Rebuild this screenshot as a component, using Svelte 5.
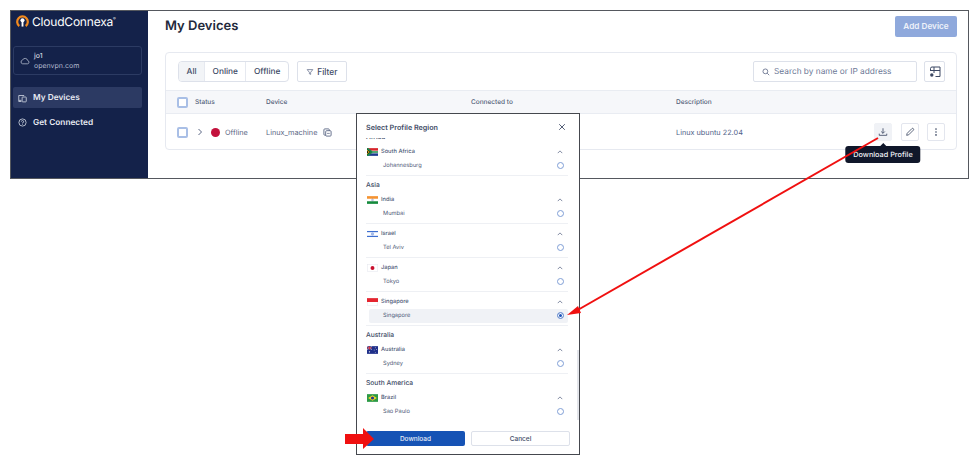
<script>
  const regions = [
    { name: 'Africa', groups: [{ country: 'South Africa', flag: 'za', city: 'Johannesburg' }] },
    {
      name: 'Asia',
      groups: [
        { country: 'India', flag: 'in', city: 'Mumbai' },
        { country: 'Israel', flag: 'il', city: 'Tel Aviv' },
        { country: 'Japan', flag: 'jp', city: 'Tokyo' },
        { country: 'Singapore', flag: 'sg', city: 'Singapore', selected: true }
      ]
    },
    { name: 'Australia', groups: [{ country: 'Australia', flag: 'au', city: 'Sydney' }] },
    { name: 'South America', groups: [{ country: 'Brazil', flag: 'br', city: 'Sao Paulo' }] }
  ];
</script>

{#snippet flag(code)}
  <svg class="flag" viewBox="0 0 20 14">
    {#if code === 'za'}
      <rect width="20" height="14" fill="#fff" />
      <rect width="20" height="4.5" fill="#d8232a" />
      <rect y="9.5" width="20" height="4.5" fill="#1b3a8f" />
      <path d="M0 0 L9 7 L0 14 Z" fill="#111" />
      <path d="M0 0 L9 7 L20 7" fill="none" stroke="#1a8a4a" stroke-width="3" />
      <path d="M0 14 L9 7" fill="none" stroke="#1a8a4a" stroke-width="3" />
      <path d="M0 3 L5 7 L0 11 Z" fill="#f5c518" />
      <path d="M0 4.5 L3 7 L0 9.5 Z" fill="#111" />
    {:else if code === 'in'}
      <rect width="20" height="14" fill="#fff" />
      <rect width="20" height="4.7" fill="#f59331" />
      <rect y="9.3" width="20" height="4.7" fill="#148a3c" />
      <circle cx="10" cy="7" r="1.6" fill="none" stroke="#23308f" stroke-width=".6" />
    {:else if code === 'il'}
      <rect width="20" height="14" fill="#fff" />
      <rect y="1.5" width="20" height="2.2" fill="#3f6fd0" />
      <rect y="10.3" width="20" height="2.2" fill="#3f6fd0" />
      <path d="M10 4.6 L12.2 8.4 L7.8 8.4 Z M10 9.4 L7.8 5.6 L12.2 5.6 Z" fill="none" stroke="#3f6fd0" stroke-width=".6" />
    {:else if code === 'jp'}
      <rect x=".5" y=".5" width="19" height="13" fill="#fff" stroke="#e6e8ee" />
      <circle cx="10" cy="7" r="3.6" fill="#c8102e" />
    {:else if code === 'sg'}
      <rect x=".5" y=".5" width="19" height="13" fill="#fff" stroke="#e6e8ee" />
      <rect width="20" height="7" fill="#e5252f" />
    {:else if code === 'au'}
      <rect width="20" height="14" fill="#1f2f8a" />
      <rect width="9" height="6.5" fill="#3a478f" />
      <path d="M0 0 L9 6.5 M9 0 L0 6.5" stroke="#e5e7f2" stroke-width="1" />
      <path d="M4.5 0 V6.5 M0 3.2 H9" stroke="#e5252f" stroke-width="1.4" />
      <circle cx="4.5" cy="10.3" r="1.2" fill="#fff" />
      <circle cx="15" cy="3" r=".8" fill="#fff" />
      <circle cx="17.5" cy="6" r=".8" fill="#fff" />
      <circle cx="13" cy="7" r=".8" fill="#fff" />
      <circle cx="15" cy="11.3" r=".8" fill="#fff" />
    {:else if code === 'br'}
      <rect width="20" height="14" fill="#2c9a46" />
      <path d="M10 1.8 L18 7 L10 12.2 L2 7 Z" fill="#f3d32c" />
      <circle cx="10" cy="7" r="2.9" fill="#23378f" />
    {/if}
  </svg>
{/snippet}

<div class="window">
  <aside class="sidebar">
    <div class="brand">
      <svg class="logo" viewBox="0 0 14 14">
        <path d="M3.6 12.4 A5.7 5.7 0 1 1 10.4 12.4" fill="none" stroke="#f28a1e" stroke-width="2.4" />
        <circle cx="7" cy="6.2" r="2.2" fill="#fff" />
        <rect x="6" y="7" width="2" height="6" fill="#fff" />
      </svg>
      <span>CloudConnexa</span><sup>®</sup>
    </div>
    <div class="account">
      <svg class="cloud" viewBox="0 0 16 12">
        <path d="M4.2 10.5 H12 A2.6 2.6 0 0 0 12.4 5.4 A4.4 4.4 0 0 0 4 4.6 A3 3 0 0 0 4.2 10.5 Z" fill="none" stroke="#c9d0df" stroke-width="1.1" />
      </svg>
      <div>
        <div class="acc-name">jo1</div>
        <div class="acc-domain">openvpn.com</div>
      </div>
    </div>
    <nav>
      <div class="nav-item active">
        <svg viewBox="0 0 12 12">
          <path d="M8 2.5 V2 H1 V8.5 H4.5 M1 8.5 V10 H4.5" fill="none" stroke="#dfe4ee" stroke-width="1" />
          <rect x="5.5" y="4" width="5.5" height="6.5" rx=".8" fill="none" stroke="#dfe4ee" stroke-width="1" />
        </svg>
        My Devices
      </div>
      <div class="nav-item">
        <svg viewBox="0 0 12 12">
          <circle cx="6" cy="6" r="4.8" fill="none" stroke="#dfe4ee" stroke-width="1" />
          <path d="M4.5 4.8 A1.5 1.5 0 1 1 6 6.4 V7.2" fill="none" stroke="#dfe4ee" stroke-width="1" />
          <circle cx="6" cy="8.7" r=".6" fill="#dfe4ee" />
        </svg>
        Get Connected
      </div>
    </nav>
  </aside>

  <main class="content">
    <header class="top">
      <h1>My Devices</h1>
      <button class="add">Add Device</button>
    </header>

    <section class="card">
      <div class="toolbar">
        <div class="segments">
          <span class="seg on">All</span>
          <span class="seg">Online</span>
          <span class="seg">Offline</span>
        </div>
        <button class="filter">
          <svg viewBox="0 0 10 10"><path d="M1.5 2 H8.5 L5.8 5.4 V8 L4.2 7.2 V5.4 Z" fill="none" stroke="#5a6684" stroke-width=".9" /></svg>
          Filter
        </button>
        <div class="search">
          <svg viewBox="0 0 10 10"><circle cx="4.2" cy="4.2" r="3" fill="none" stroke="#5a6684" stroke-width="1" /><path d="M6.5 6.5 L9 9" stroke="#5a6684" stroke-width="1" /></svg>
          Search by name or IP address
        </div>
        <button class="square">
          <svg viewBox="0 0 12 12">
            <path d="M4 1 H11 V10.5 H6.5 M1.5 5 V2.5 A1.5 1.5 0 0 1 3 1 H4 M1.5 4.5 H11 M5 1 V7" fill="none" stroke="#3d4964" stroke-width="1" />
            <circle cx="2.8" cy="9" r="1.7" fill="#3d4964" />
          </svg>
        </button>
      </div>

      <div class="row head">
        <span class="check"></span>
        <span class="c-status">Status</span>
        <span class="c-device">Device</span>
        <span class="c-conn">Connected to</span>
        <span>Description</span>
      </div>

      <div class="row body">
        <span class="check"></span>
        <div class="c-status status">
          <svg class="chev" viewBox="0 0 6 8"><path d="M1.5 1 L4.5 4 L1.5 7" fill="none" stroke="#5a6684" stroke-width="1" /></svg>
          <span class="dot"></span>
          Offline
        </div>
        <div class="c-device device">
          Linux_machine
          <svg viewBox="0 0 10 10">
            <rect x="1" y="1" width="6" height="7" rx="1" fill="none" stroke="#5a6684" stroke-width="1" />
            <rect x="3" y="3" width="6" height="6" rx="1" fill="#fff" stroke="#5a6684" stroke-width="1" />
            <path d="M4.5 6 H7.5" stroke="#5a6684" stroke-width=".8" />
          </svg>
        </div>
        <span class="c-conn"></span>
        <span class="desc">Linux ubuntu 22.04</span>
        <div class="actions">
          <div class="tool hover">
            <svg viewBox="0 0 12 12"><path d="M6 1.5 V7.5 M3.8 5.4 L6 7.6 L8.2 5.4 M1.5 8 V10 H10.5 V8" fill="none" stroke="#3d4964" stroke-width="1" /></svg>
            <div class="tip">Download Profile</div>
          </div>
          <div class="tool">
            <svg viewBox="0 0 12 12"><path d="M2 10 L2.6 7.6 L8.2 2 A1 1 0 0 1 10 3.8 L4.4 9.4 Z" fill="none" stroke="#3d4964" stroke-width="1" /></svg>
          </div>
          <div class="tool">
            <svg viewBox="0 0 12 12"><circle cx="6" cy="2.5" r="1" fill="#3d4964" /><circle cx="6" cy="6" r="1" fill="#3d4964" /><circle cx="6" cy="9.5" r="1" fill="#3d4964" /></svg>
          </div>
        </div>
      </div>
    </section>
  </main>
</div>

<div class="modal">
  <div class="modal-head">
    <span>Select Profile Region</span>
    <svg viewBox="0 0 10 10"><path d="M1.5 1.5 L8.5 8.5 M8.5 1.5 L1.5 8.5" stroke="#3d4964" stroke-width="1.1" /></svg>
  </div>
  <div class="list">
    <div class="list-inner">
      {#each regions as region}
        <div class="region">{region.name}</div>
        {#each region.groups as g}
          <div class="group">
            <div class="country">
              {@render flag(g.flag)}
              <span>{g.country}</span>
              <svg class="up" viewBox="0 0 8 5"><path d="M1 4 L4 1 L7 4" fill="none" stroke="#5a6684" stroke-width="1" /></svg>
            </div>
            <div class="city" class:selected={g.selected}>
              <span>{g.city}</span>
              <span class="radio"></span>
            </div>
          </div>
        {/each}
      {/each}
    </div>
    <div class="scrollbar"></div>
  </div>
  <div class="modal-foot">
    <button class="primary">Download</button>
    <button class="secondary">Cancel</button>
  </div>
</div>

<!-- annotations drawn on top of the screenshot -->
<svg class="annotations" viewBox="0 0 975 464">
  <path d="M878 138 L576 311" stroke="#f01010" stroke-width="2" />
  <path d="M567 315 L578 306 L581 313 Z" fill="#f01010" />
  <path d="M345 434 H363 V428 L374 439 L363 449 V444 H345 Z" fill="#f01010" />
</svg>

<style>
  :global(body) {
    background: #fff;
    font-family: Inter, "Noto Sans", sans-serif;
    color: #414c66;
    text-rendering: geometricPrecision;
  }
  .window {
    display: flex;
    width: 957px;
    height: 167px;
    margin: 10px 0 0 10px;
    border: 1px solid #55585e;
  }
  .sidebar {
    width: 137px;
    flex: none;
    background: #14224a;
    color: #e7eaf2;
    padding: 0 6px 0 2px;
    box-sizing: border-box;
  }
  .brand {
    display: flex;
    align-items: center;
    height: 20px;
    margin: 0 0 15px 3px;
    color: #fff;
    font-size: 12px;
    letter-spacing: -0.2px;
  }
  .logo {
    width: 13px;
    height: 14px;
    margin-right: 3px;
  }
  sup {
    font-size: 4px;
    align-self: flex-start;
    margin-top: 5px;
  }
  .account {
    display: flex;
    align-items: center;
    gap: 4px;
    height: 29px;
    padding: 1px 0 0 6px;
    box-sizing: border-box;
    border: 1px solid #2c3b63;
    border-radius: 3px;
    font-size: 7px;
    line-height: 10px;
  }
  .cloud {
    width: 10px;
    height: 8px;
  }
  .acc-domain {
    color: #aeb6ca;
  }
  nav {
    margin-top: 12px;
  }
  .nav-item {
    display: flex;
    align-items: center;
    gap: 6px;
    height: 21px;
    box-sizing: border-box;
    padding: 1px 0 0 5px;
    margin-bottom: 3.5px;
    border-radius: 2px;
    font-size: 8.3px;
    font-weight: 600;
  }
  .nav-item svg {
    width: 9px;
    height: 9px;
  }
  .active {
    background: #2c3a63;
  }
  .content {
    flex: 1;
    min-width: 0;
    padding: 0 11px 0 17px;
    background: #fff;
  }
  .top {
    display: flex;
    align-items: center;
    justify-content: space-between;
    height: 30px;
    margin-bottom: 11px;
  }
  h1 {
    margin: 0;
    font-size: 13px;
    font-weight: 600;
    color: #232a3c;
  }
  .add {
    width: 62px;
    height: 21px;
    padding: 0;
    border: none;
    border-radius: 2px;
    background: #8fa9dc;
    color: #eef2fa;
    font: 600 8.2px Inter, sans-serif;
  }
  .card {
    height: 98px;
    box-sizing: border-box;
    border: 1px solid #e6e9f0;
    border-radius: 4px;
  }
  .toolbar {
    display: flex;
    align-items: center;
    gap: 8px;
    height: 37px;
    padding: 0 11px 0 12px;
  }
  .segments {
    display: flex;
    height: 21px;
    box-sizing: border-box;
    border: 1px solid #dde1ea;
    border-radius: 4px;
    overflow: hidden;
    font-size: 8.3px;
    font-weight: 500;
  }
  .seg {
    display: flex;
    align-items: center;
    padding: 0 7.5px;
    border-left: 1px solid #e6e9f0;
  }
  .seg:first-child {
    border-left: none;
  }
  .seg.on {
    background: #f2f4f7;
  }
  .filter {
    display: flex;
    align-items: center;
    justify-content: center;
    gap: 3px;
    width: 50px;
    height: 21px;
    padding: 0;
    background: #fff;
    border: 1px solid #dde1ea;
    border-radius: 2px;
    color: #414c66;
    font: 500 8.3px Inter, sans-serif;
  }
  .filter svg {
    width: 8px;
    height: 8px;
  }
  .search {
    display: flex;
    align-items: center;
    gap: 4px;
    width: 164px;
    height: 21px;
    box-sizing: border-box;
    margin-left: auto;
    margin-right: -1px;
    padding-left: 8px;
    border: 1px solid #dde1ea;
    border-radius: 2px;
    color: #6c7896;
    font-size: 8.3px;
  }
  .search svg {
    width: 8px;
    height: 8px;
  }
  .square {
    display: grid;
    place-items: center;
    width: 21px;
    height: 21px;
    padding: 0;
    background: #fff;
    border: 1px solid #dde1ea;
    border-radius: 2px;
  }
  .square svg {
    width: 12px;
    height: 12px;
  }
  .row {
    display: flex;
    align-items: center;
    padding-left: 11px;
  }
  .head {
    height: 24px;
    box-sizing: border-box;
    background: #f6f7fa;
    border-top: 1px solid #e9ecf2;
    border-bottom: 1px solid #e9ecf2;
    font-size: 6.5px;
    font-weight: 500;
    color: #525d78;
  }
  .body {
    height: 35px;
    box-sizing: border-box;
    padding-top: 1px;
    font-size: 7.3px;
    color: #5a6684;
  }
  .check {
    width: 11px;
    height: 11px;
    flex: none;
    box-sizing: border-box;
    border: 2px solid #a9bfe6;
    border-radius: 2px;
    background: #fff;
  }
  .c-status {
    width: 71px;
    margin-left: 7px;
    flex: none;
  }
  .c-device {
    width: 205px;
    flex: none;
  }
  .c-conn {
    width: 205px;
    flex: none;
  }
  .status {
    display: flex;
    align-items: center;
  }
  .chev {
    width: 6px;
    height: 8px;
    margin: 0 8px 0 2px;
  }
  .dot {
    width: 9px;
    height: 9px;
    margin-right: 5px;
    border-radius: 50%;
    background: #c3113c;
  }
  .device {
    display: flex;
    align-items: center;
    gap: 6px;
  }
  .device svg {
    width: 9px;
    height: 9px;
  }
  .desc {
    color: #4f6288;
  }
  .actions {
    display: flex;
    gap: 8.5px;
    margin-left: auto;
    margin-right: 11px;
  }
  .tool {
    position: relative;
    display: grid;
    place-items: center;
    width: 18px;
    height: 18px;
    box-sizing: border-box;
    border: 1px solid #e3e6ee;
    border-radius: 2px;
  }
  .tool svg {
    width: 10px;
    height: 10px;
  }
  .tool.hover {
    background: #f0f2f6;
    border-color: #f0f2f6;
  }
  .tip {
    position: absolute;
    top: 22px;
    left: 50%;
    transform: translateX(-50%);
    padding: 0 8px;
    height: 17px;
    display: flex;
    align-items: center;
    border-radius: 3px;
    background: #10172a;
    color: #f0f2f7;
    font-size: 7.3px;
    font-weight: 500;
    white-space: nowrap;
  }
  .tip::before {
    content: '';
    position: absolute;
    top: -3px;
    left: 50%;
    margin-left: -3px;
    border: 3px solid transparent;
    border-top: none;
    border-bottom-color: #10172a;
  }
  .modal {
    position: absolute;
    left: 356px;
    top: 113px;
    width: 224px;
    height: 342px;
    box-sizing: border-box;
    display: flex;
    flex-direction: column;
    background: #fff;
    border: 1px solid #45484e;
  }
  .modal-head {
    display: flex;
    align-items: center;
    justify-content: space-between;
    height: 24px;
    flex: none;
    padding: 2px 13px 0 9px;
    box-sizing: border-box;
    font-size: 7.2px;
    font-weight: 600;
    color: #414c66;
  }
  .modal-head svg {
    width: 8px;
    height: 8px;
  }
  .list {
    position: relative;
    flex: 1;
    min-height: 0;
    overflow: hidden;
  }
  .list-inner {
    margin-top: -7.5px;
    padding: 0 11px 0 9px;
  }
  .scrollbar {
    position: absolute;
    right: 0;
    top: 212px;
    width: 2px;
    height: 70px;
    background: #e4e6eb;
  }
  .region {
    height: 14px;
    line-height: 12px;
    font-size: 6.7px;
    font-weight: 500;
    color: #414c66;
  }
  .group {
    height: 31px;
    margin-bottom: 3px;
    box-sizing: border-box;
    border-bottom: 1px solid #eef0f4;
  }
  .group:last-child {
    height: 34px;
    margin-bottom: 0;
    border-bottom: none;
  }
  .country {
    display: flex;
    align-items: center;
    height: 14px;
    padding: 0 5px 0 1px;
    font-size: 5.7px;
    font-weight: 500;
    color: #4f5b78;
  }
  .flag {
    width: 11px;
    height: 8px;
    margin-right: 3px;
  }
  .up {
    width: 6px;
    height: 4px;
    margin-left: auto;
  }
  .city {
    display: flex;
    align-items: center;
    justify-content: space-between;
    height: 14px;
    padding: 0 4px 0 14px;
    margin-left: 3px;
    font-size: 5.7px;
    color: #4f5b78;
    border-radius: 2px;
  }
  .city.selected {
    background: #f0f2f6;
  }
  .radio {
    width: 7px;
    height: 7px;
    box-sizing: border-box;
    border: 1px solid #7f9ed6;
    border-radius: 50%;
  }
  .selected .radio {
    background: #1a52b8;
    box-shadow: inset 0 0 0 1px #fff;
  }
  .modal-foot {
    display: flex;
    justify-content: space-between;
    flex: none;
    padding: 9px 9px 8px 9px;
  }
  .modal-foot button {
    width: 99px;
    height: 15px;
    padding: 0;
    border-radius: 2px;
    font: 500 6.5px Inter, sans-serif;
  }
  .primary {
    background: #1653b5;
    border: none;
    color: #e8edf8;
  }
  .secondary {
    background: #fff;
    border: 1px solid #dde1ea;
    color: #414c66;
  }
  .annotations {
    position: absolute;
    left: 0;
    top: 0;
    width: 975px;
    height: 464px;
    pointer-events: none;
  }
</style>
